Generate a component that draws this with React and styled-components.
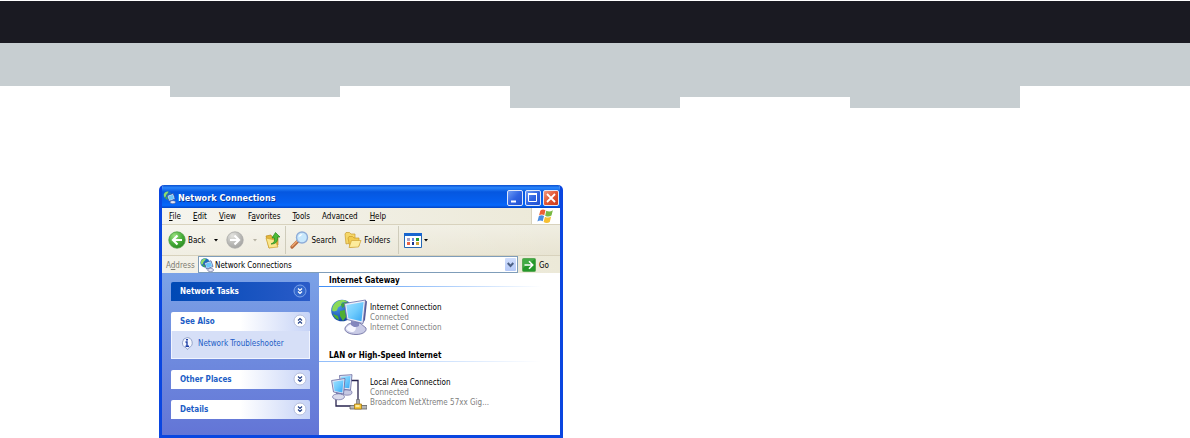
import styled, { createGlobalStyle, css } from 'styled-components'

const App = () => {
    return (
        <>
            <GlobalStyle />
            <Masthead>
                <DarkBar />
                <Steps>
                    {STEPS.map((level, i) => <Step key={i} $level={level} />)}
                </Steps>
            </Masthead>
            <Page>
                <Window>
                    <TitleBar>
                        <NetworkIcon size={13} />
                        <Title>Network Connections</Title>
                        <CaptionButton aria-label="Minimize">
                            <svg width="14" height="14"><path d="M3 10.5h5" stroke="#fff" strokeWidth="2" /></svg>
                        </CaptionButton>
                        <CaptionButton aria-label="Maximize">
                            <svg width="14" height="14" fill="none" stroke="#fff"><path d="M2.5 3.5h8v7h-8z" /><path d="M2 3h9" strokeWidth="2" /></svg>
                        </CaptionButton>
                        <CaptionButton $close aria-label="Close">
                            <svg width="14" height="14"><path d="M3 3l8 8M11 3l-8 8" stroke="#fff" strokeWidth="1.8" /></svg>
                        </CaptionButton>
                    </TitleBar>
                    <MenuBar>
                        <Menus>
                            {MENUS.map(([before, key, after]) => (
                                <MenuButton key={before + key}>{before}<u>{key}</u>{after}</MenuButton>
                            ))}
                        </Menus>
                        <Brand><FlagIcon /></Brand>
                    </MenuBar>
                    <ToolBar>
                        <ToolButton><RoundArrow back /><Label>Back</Label></ToolButton>
                        <DropButton aria-label="Back history"><Caret /></DropButton>
                        <ToolButton aria-label="Forward"><RoundArrow /></ToolButton>
                        <DropButton aria-label="Forward history" $disabled><Caret /></DropButton>
                        <ToolButton aria-label="Up"><FolderUpIcon /></ToolButton>
                        <Separator />
                        <ToolButton><SearchIcon /><Label>Search</Label></ToolButton>
                        <ToolButton $spaced><FoldersIcon /><Label>Folders</Label></ToolButton>
                        <Separator $wide />
                        <ToolButton aria-label="Views"><ViewsIcon /></ToolButton>
                        <DropButton aria-label="Choose view" $tight><Caret /></DropButton>
                    </ToolBar>
                    <AddressBar>
                        <AddressLabel htmlFor="address">A<u>d</u>dress</AddressLabel>
                        <AddressBox>
                            <NetworkIcon size={14} />
                            <AddressInput id="address" defaultValue="Network Connections" />
                            <AddressDrop aria-label="Show addresses">
                                <svg width="7" height="6" fill="none" stroke="#4d6185" strokeWidth="2"><path d="M0.7 1l2.8 3 2.8-3" /></svg>
                            </AddressDrop>
                        </AddressBox>
                        <GoButton><GoIcon /><Label>Go</Label></GoButton>
                    </AddressBar>
                    <Body>
                        <SideBar>
                            <Panel>
                                <PanelHead $primary><Label>Network Tasks</Label><Chevron primary /></PanelHead>
                            </Panel>
                            <Panel>
                                <PanelHead><Label>See Also</Label><Chevron up /></PanelHead>
                                <PanelBody>
                                    <InfoIcon />
                                    <a href="#troubleshooter">Network Troubleshooter</a>
                                </PanelBody>
                            </Panel>
                            <Panel>
                                <PanelHead><Label>Other Places</Label><Chevron /></PanelHead>
                            </Panel>
                            <Panel>
                                <PanelHead><Label>Details</Label><Chevron /></PanelHead>
                            </Panel>
                        </SideBar>
                        <Content>
                            <GroupTitle>Internet Gateway</GroupTitle>
                            <Connection>
                                <GatewayIcon />
                                <Details>
                                    <Name>Internet Connection</Name>
                                    <Info>Connected</Info>
                                    <Info>Internet Connection</Info>
                                </Details>
                            </Connection>
                            <GroupTitle $pale>LAN or High-Speed Internet</GroupTitle>
                            <Connection>
                                <LanIcon />
                                <Details>
                                    <Name>Local Area Connection</Name>
                                    <Info>Connected</Info>
                                    <Info>Broadcom NetXtreme 57xx Gig...</Info>
                                </Details>
                            </Connection>
                        </Content>
                    </Body>
                </Window>
            </Page>
        </>
    )
}

const STEPS = [0, 1, 0, 2, 1, 2, 0]

const MENUS = [
    ['', 'F', 'ile'],
    ['', 'E', 'dit'],
    ['', 'V', 'iew'],
    ['F', 'a', 'vorites'],
    ['', 'T', 'ools'],
    ['Adva', 'n', 'ced'],
    ['', 'H', 'elp'],
]

const Caret = () => (
    <svg width="4" height="3"><path d="M0 0h4L2 2.500z" fill="currentColor" /></svg>
)

const NetworkIcon = ({ size }) => (
    <svg width={size} height={size} viewBox="0 0 14 14">
        <circle cx="5" cy="4.800" r="4.600" fill="#1b6fc0" />
        <path d="M.8 4C1.500 1.500 3.500.3 6 .5L5 2.500 3.500 4 3 6 1.500 7z" fill="#8fdc6a" />
        <path d="M2.500 7l2-.5.5 2.700C3.800 9 3 8.300 2.500 7z" fill="#4db53c" />
        <path d="M4.500 5L11 2.800 13 8.500 6.500 11z" fill="#eaf4ff" stroke="#2f4c92" strokeWidth=".7" />
        <path d="M5.500 5.700l5-1.700L12 8l-5 1.900z" fill="#6cc6fa" />
        <ellipse cx="10.600" cy="12" rx="3" ry="1.600" fill="#e6e8f5" stroke="#535d90" strokeWidth=".6" />
    </svg>
)

const FlagIcon = () => (
    <svg width="18" height="16" viewBox="1 0 15 14">
        <path d="M3.500 2.300C5 1 6.500 1 8 1.900L7 6.300C5.500 5.300 4 5.400 2.400 6.500z" fill="#ed6034" />
        <path d="M8.700 2.300c1.900 1 3.800 1 5.800-.3l-1.200 4.600c-1.800 1.200-3.700 1.100-5.500.1z" fill="#78b943" />
        <path d="M2.200 7.300c1.600-1.100 3.100-1.200 4.600-.2l-1.200 4.500c-1.500-.9-3-.8-4.600.3z" fill="#4a8be0" />
        <path d="M7.600 7.600c1.800 1 3.600 1 5.400-.1l-1.200 4.700c-1.800 1.200-3.600 1.100-5.400 0z" fill="#f6bf32" />
    </svg>
)

const RoundArrow = ({ back }) => (
    <svg width="18" height="18" viewBox="0 0 18 18">
        <defs>
            <radialGradient id={back ? 'back' : 'forward'} cx=".35" cy=".25" r=".8">
                <stop offset="0" stopColor={back ? '#9be080' : '#e4e4e0'} />
                <stop offset=".6" stopColor={back ? '#45ab38' : '#b9b9b6'} />
                <stop offset="1" stopColor={back ? '#2a8a22' : '#a3a3a1'} />
            </radialGradient>
        </defs>
        <circle cx="9" cy="9" r="8.200" fill={`url(#${back ? 'back' : 'forward'})`} stroke={back ? '#4c9f42' : '#aaaaa7'} strokeWidth=".8" />
        <path
            d={back ? 'M9.500 4.500L5 9l4.500 4.500M5.500 9H14' : 'M8.500 4.500L13 9l-4.500 4.500M12.500 9H4'}
            fill="none"
            stroke="#fff"
            strokeWidth="2.200"
        />
    </svg>
)

const FolderUpIcon = () => (
    <svg width="16" height="18" viewBox="0 0 16 18">
        <path d="M1 5l5-1 1 2 6-1v9l-9 3z" fill="#e5b638" stroke="#bb8d20" strokeWidth=".7" />
        <path d="M1 7l9 2 3 7-9 1z" fill="#fbe78c" stroke="#cda232" strokeWidth=".7" />
        <path d="M6 13c3-1 4-3 3.500-6H7l3.500-5.500L15 6h-2.500c.5 5-2 7-6.500 7z" fill="#4dbb36" stroke="#278520" strokeWidth=".7" />
    </svg>
)

const SearchIcon = () => (
    <svg width="19" height="18" viewBox="0 0 19 18">
        <path d="M8 10l-6 6" stroke="#b86a3c" strokeWidth="3.200" strokeLinecap="round" />
        <path d="M7.500 9.800l-5.500 5.400" stroke="#f0ab72" strokeWidth="1.200" strokeLinecap="round" />
        <circle cx="12" cy="6.500" r="5.500" fill="#c8e8fc" stroke="#8fadd8" strokeWidth="1.400" />
        <path d="M8.500 6c.4-2 2-3 4-3-1 1.500-2 2.500-4 3z" fill="#fff" />
    </svg>
)

const FoldersIcon = () => (
    <svg width="18" height="18" viewBox="0 0 18 18">
        <path d="M1 3l1-1.500h3.500L7 3h4v8l-9 2z" fill="#f5d769" stroke="#c99b2c" strokeWidth=".7" />
        <path d="M4 7l1-1.500h3.500L10 7h5v8l-9 1.500z" fill="#f2cb4f" stroke="#c99b2c" strokeWidth=".7" />
        <path d="M5 16.500L7.500 9.500H17L14.500 16z" fill="#fdec9b" stroke="#cfa336" strokeWidth=".7" />
    </svg>
)

const ViewsIcon = () => (
    <svg width="18" height="15" viewBox="0 0 18 15">
        <path d="M.5.5h17v14H.5z" fill="#fff" stroke="#2467b4" />
        <path d="M0 0h18v3H0z" fill="#1765cf" />
        <path d="M3 5h3v3H3z" fill="#a7a4c9" />
        <path d="M8 5h2v3H8z" fill="#6d86d8" />
        <path d="M12 5h3v3h-3z" fill="#259c2e" />
        <path d="M3 9h3v3H3z" fill="#ea6545" />
        <path d="M8 9h2v3H8z" fill="#17348e" />
        <path d="M12 9h3v3h-3z" fill="#d2a637" />
    </svg>
)

const GoIcon = () => (
    <svg width="14" height="14" viewBox="0 0 14 14">
        <rect x=".5" y=".5" width="13" height="13" rx="1" fill="#25982b" stroke="#5aa855" />
        <path d="M1 1h12L1 10z" fill="#57b957" opacity=".6" />
        <path d="M2.500 7h8M7 3.300L10.700 7 7 10.700" fill="none" stroke="#fff" strokeWidth="1.600" />
    </svg>
)

const InfoIcon = () => (
    <svg width="12" height="13" viewBox="0 0 12 13">
        <path d="M6 .6a5.200 5.200 0 0 1 2 10L6.500 12.600 5 10.700A5.200 5.200 0 0 1 6 .6z" fill="#f4f7ff" stroke="#8c9cc4" strokeWidth=".9" />
        <path d="M6 2v1.600" stroke="#1e3fa6" strokeWidth="2" />
        <path d="M4.500 5H6v4M4.500 9.200h3.500" fill="none" stroke="#1e3fa6" strokeWidth="1.400" />
    </svg>
)

const ChevronIcon = ({ up, primary }) => (
    <svg width="14" height="14" viewBox="0 0 14 14">
        <circle cx="7" cy="7" r="6" fill={primary ? '#3267cc' : '#fff'} stroke={primary ? '#7ea3e8' : '#b4bddb'} />
        <path
            d={up ? 'M5 6.500l2-2 2 2M5 9.500l2-2 2 2' : 'M5 4.500l2 2 2-2M5 7.500l2 2 2-2'}
            fill="none"
            stroke={primary ? '#fff' : '#213e85'}
            strokeWidth="1.100"
        />
    </svg>
)

const Chevron = ({ up, primary }) => (
    <Toggle aria-label={up ? 'Collapse' : 'Expand'}>
        <ChevronIcon up={up} primary={primary} />
    </Toggle>
)

const ScreenGradient = ({ id }) => (
    <linearGradient id={id} x1="0" y1="0" x2="1" y2="1">
        <stop offset="0" stopColor="#9ee0ff" />
        <stop offset=".5" stopColor="#6fcbfd" />
        <stop offset="1" stopColor="#35a5f2" />
    </linearGradient>
)

const GatewayIcon = () => (
    <svg width="36" height="36" viewBox="0 0 36 36">
        <defs>
            <ScreenGradient id="gateway" />
            <radialGradient id="globe" cx=".3" cy=".3" r=".8">
                <stop offset="0" stopColor="#4d9bea" />
                <stop offset="1" stopColor="#0b3a9c" />
            </radialGradient>
        </defs>
        <circle cx="11" cy="11.500" r="10.800" fill="url(#globe)" />
        <path d="M1.500 8C3.500 3 8 .5 13 1l4 2-6 .5-1 3-3 2-1 3-3 1-2-1z" fill="#8ad95a" />
        <path d="M10 5l5-2 2 1-3 3-3 2z" fill="#3da33c" />
        <path d="M9 12l5-1 1 7-3 4-3-5zM2 15l5 2 1 4c-3-1-5-3-6-6z" fill="#4fae32" />
        <path d="M14 29c2-4 5-5 8-5h7l6 5c1 4-4 6.500-10 6.500S13 33 14 29z" fill="#c9cbe6" stroke="#65669b" strokeWidth=".8" />
        <path d="M15 29c2-3 5-4 8-3 3 2 2 6-1 7-4 0-7-2-7-4z" fill="#f7f7ff" />
        <path d="M20 22l8 1v4c-3 2-6 1-8-1z" fill="#8487bd" />
        <path d="M34 1l2 1.500L34 21l-2.500 3.500z" fill="#555a9a" />
        <path d="M13.500 4.500L34.500 1 32 24.500 16 20.500z" fill="#eceefa" stroke="#6b70a8" strokeWidth=".8" />
        <path d="M15.300 6L32.600 3 30.500 22.300 17.300 19.200z" fill="url(#gateway)" />
    </svg>
)

const LanIcon = () => (
    <svg width="36" height="36" viewBox="0 0 36 36">
        <defs><ScreenGradient id="lan" /></defs>
        <path d="M20 6.500h7v20M5 25v7h15" fill="none" stroke="#28244f" strokeWidth="1.300" />
        <ellipse cx="16" cy="18.500" rx="5" ry="2.700" fill="#c6c8e2" stroke="#6b6c9e" strokeWidth=".7" />
        <path d="M8.500 1.500L21 .7 19.500 16 10 15z" fill="#e5e7f6" stroke="#62669d" strokeWidth=".8" />
        <path d="M10 2.700l9.500-.7-1.200 12.300-7.300-.8z" fill="url(#lan)" />
        <path d="M5 18l6 1v3H5z" fill="#888bb8" />
        <ellipse cx="7.500" cy="22.800" rx="6" ry="3" fill="#dadbec" stroke="#6b6c9e" strokeWidth=".7" />
        <path d="M.6 6.500l13.400-2L12.500 20 2.500 18z" fill="#e5e7f6" stroke="#62669d" strokeWidth=".8" />
        <path d="M2.200 7.700l10.300-1.500L11.300 18.500l-7.700-1.500z" fill="url(#lan)" />
        <path d="M25.500 25.500h3v5h-3z" fill="#a5a7ac" stroke="#616265" strokeWidth=".6" />
        <path d="M19 31.500h17v3.500H19z" fill="#b5b6b8" stroke="#5d5e60" strokeWidth=".8" />
        <path d="M23.500 30h7v5h-7z" fill="#f5c739" stroke="#a37a18" strokeWidth=".8" />
        <path d="M24.500 31h4v2h-4z" fill="#ffec9d" />
    </svg>
)

const GlobalStyle = createGlobalStyle`
    *{
        box-sizing: border-box;
    }
    body{
        margin: 0;
        background: #fff;
        font: 8px/10px 'DejaVu Sans Condensed', 'DejaVu Sans', sans-serif;
        color: #000;
    }
    svg{
        display: block;
        flex-shrink: 0;
    }
`

const buttonReset = css`
    display: flex;
    align-items: center;
    padding: 0;
    border: none;
    background: none;
    font: inherit;
    color: inherit;
    white-space: nowrap;
    cursor: pointer;
`

const Masthead = styled.header`
    padding-top: 1px;
`

const DarkBar = styled.div`
    height: 42px;
    background: #1a1a22;
`

const Steps = styled.div`
    display: grid;
    grid-template-columns: repeat(7, 1fr);
    align-items: start;
    height: 65px;
`

const Step = styled.div`
    height: ${({ $level }) => 43 + $level * 11}px;
    background: #c7ced1;
`

const Page = styled.main`
    padding: 77px 0 0 159px;
`

const Window = styled.section`
    max-width: 404px;
    border: 3px solid #0a46e0;
    border-top: none;
    border-radius: 5px 5px 0 0;
    background: #ece9d8;
    overflow: hidden;
`

const TitleBar = styled.div`
    display: flex;
    align-items: center;
    gap: 2px;
    height: 23px;
    margin: 0 -3px;
    padding: 2px 4px 0;
    background: linear-gradient(#0a4fd0, #2a86fb 12%, #0557e0 30%, #0560f0 75%, #0568fb 88%, #0343c4);
`

const Title = styled.h1`
    flex: 1;
    margin: 0;
    padding-top: 1px;
    font-size: 9px;
    line-height: 12px;
    color: #fff;
    text-shadow: 1px 1px #0a318f;
    white-space: nowrap;
`

const CaptionButton = styled.button`
    ${buttonReset}
    justify-content: center;
    width: 16px;
    height: 16px;
    border: 1px solid #dfe8fa;
    border-radius: 2px;
    background: ${({ $close }) => ($close ? 'linear-gradient(135deg, #f09a7f, #e25632 50%, #c63a1c)' : 'linear-gradient(135deg, #6f9cf5, #2f63e2 50%, #2050d0)')};
`

const Label = styled.span`
    padding-top: 2px;
`

const MenuBar = styled.div`
    display: flex;
    height: 17px;
    border-bottom: 1px solid #d8d2bd;
    background: linear-gradient(90deg, #f5f4ee, #ece9d8);
`

const Menus = styled.nav`
    display: flex;
    flex: 1;
    align-items: center;
    gap: 12px;
    padding: 2px 0 0 7px;
`

const MenuButton = styled.button`
    ${buttonReset}
    display: block;
`

const Brand = styled.div`
    display: flex;
    align-items: center;
    justify-content: center;
    width: 29px;
    border-left: 1px solid #d8d2bd;
    background: #fff;
`

const ToolBar = styled.div`
    display: flex;
    align-items: center;
    height: 31px;
    padding-left: 6px;
    border-bottom: 1px solid #d8d2bd;
    background: linear-gradient(90deg, rgba(255, 255, 255, 0.4), rgba(255, 255, 255, 0)), linear-gradient(#f0eee2, #e8e4d2);
`

const ToolButton = styled.button`
    ${buttonReset}
    gap: 2px;
    margin-left: ${({ $spaced }) => ($spaced ? 8 : 0)}px;
`

const DropButton = styled.button`
    ${buttonReset}
    justify-content: center;
    width: ${({ $tight }) => ($tight ? 8 : 21)}px;
    color: ${({ $disabled }) => ($disabled ? '#b5b2a3' : '#000')};
`

const Separator = styled.div`
    width: 1px;
    height: 28px;
    margin: ${({ $wide }) => ($wide ? '0 5px 0 8px' : '0 4px')};
    background: #cfccbb;
`

const AddressBar = styled.div`
    display: flex;
    align-items: center;
    height: 17px;
    padding: 0 4px;
    background: linear-gradient(90deg, #f3f1e8, #ece9d8);
`

const AddressLabel = styled.label`
    width: 32px;
    padding-top: 2px;
    color: #7d7b70;
`

const AddressBox = styled.div`
    display: flex;
    flex: 1;
    align-items: center;
    gap: 1px;
    height: 17px;
    padding: 0 1px;
    border: 1px solid #7f9db9;
    background: #fff;
`

const AddressInput = styled.input`
    flex: 1;
    min-width: 0;
    padding: 2px 0 0;
    border: none;
    outline: none;
    background: none;
    font: inherit;
    color: inherit;
`

const AddressDrop = styled.button`
    ${buttonReset}
    justify-content: center;
    width: 11px;
    height: 13px;
    border-radius: 1px;
    background: linear-gradient(#d0defc, #b5c9f8);
`

const GoButton = styled.button`
    ${buttonReset}
    gap: 3px;
    width: 38px;
    padding-left: 4px;
`

const Body = styled.div`
    display: grid;
    grid-template-columns: 157px 1fr;
`

const SideBar = styled.aside`
    display: flex;
    flex-direction: column;
    gap: 11px;
    padding: 9px 9px 16px;
    background: linear-gradient(#7ba2e7, #6375d6);
`

const Panel = styled.section`
    border-radius: 2px 2px 0 0;
    overflow: hidden;
`

const PanelHead = styled.h2`
    display: flex;
    align-items: center;
    justify-content: space-between;
    height: 19px;
    margin: 0;
    padding: 0 3px 1px 9px;
    font-size: 8px;
    line-height: 10px;
    color: ${({ $primary }) => ($primary ? '#fff' : '#215dc6')};
    background: ${({ $primary }) => ($primary ? 'linear-gradient(90deg, #0049b5, #2a5bc8)' : 'linear-gradient(90deg, #fff 50%, #c6d3f7)')};
`

const Toggle = styled.button`
    ${buttonReset}
`

const PanelBody = styled.div`
    display: flex;
    align-items: center;
    gap: 5px;
    height: 28px;
    padding: 0 9px 2px;
    border: 1px solid #f0f4ff;
    border-top: none;
    background: #d6dff7;
    a{
        padding-top: 1px;
        color: #215dc6;
        text-decoration: none;
        white-space: nowrap;
    }
`

const Content = styled.section`
    background: #fff;
`

const GroupTitle = styled.h2`
    margin: 0;
    padding: 2px 0 0 10px;
    border-bottom: 1px solid;
    border-image: linear-gradient(90deg, ${({ $pale }) => ($pale ? '#8fbcfa' : '#3d8cf5')}, #fff 92%) 1;
    font-size: 8px;
    line-height: 11px;
`

const Connection = styled.article`
    display: flex;
    align-items: center;
    gap: 3px;
    padding: 12px 0 13px 12px;
`

const Details = styled.div`
    padding-top: 2px;
`

const Name = styled.h3`
    margin: 0;
    font-size: 8px;
    font-weight: 400;
    line-height: 10px;
`

const Info = styled.p`
    margin: 0;
    color: #808080;
`

export default App
